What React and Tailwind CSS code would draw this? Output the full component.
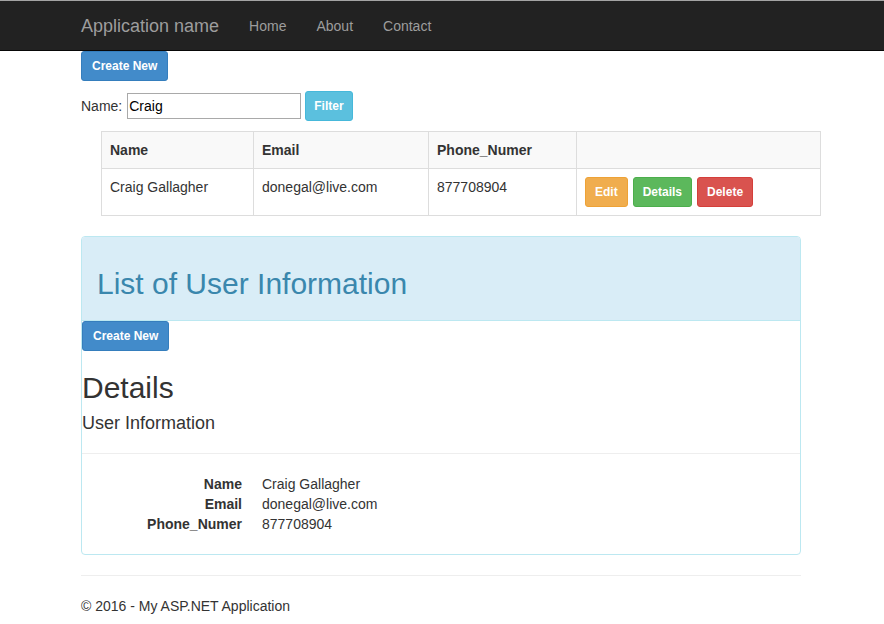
export default function App() {
  return (
    <div className="min-h-screen bg-white text-[14px] leading-[20px] text-[#333] font-['Liberation_Sans',Arial,sans-serif]">
      {/* navbar */}
      <nav className="h-[51px] bg-[#222] border-t border-t-[#a4a4a4] border-b border-b-[#080808]">
        <div className="w-[750px] mx-auto px-[15px] flex items-center h-full -translate-x-[1px]">
          <span className="text-[18px] text-[#9d9d9d] mr-[15px]">Application name</span>
          <span className="text-[#9d9d9d] px-[15px]">Home</span>
          <span className="text-[#9d9d9d] px-[15px]">About</span>
          <span className="text-[#9d9d9d] px-[15px]">Contact</span>
        </div>
      </nav>

      <div className="w-[750px] mx-auto px-[15px] -translate-x-[1px]">
        <Btn pad="px-[10px]" className="bg-[#428bca] border-[#357ebd]">Create New</Btn>

        <div className="flex items-center mt-[10px]">
          <span>Name:</span>
          <input
            defaultValue="Craig"
            className="ml-[5px] w-[174px] h-[26px] border border-[#a9a9a9] px-[1px] text-[14px] text-black outline-none"
          />
          <Btn pad="px-[8px]" className="ml-[4px] bg-[#5bc0de] border-[#46b8da]">Filter</Btn>
        </div>

        <table className="ml-[20px] mt-[10px] w-[720px] border-collapse border border-[#ddd]">
          <thead>
            <tr className="bg-[#f9f9f9]">
              <th className="w-[152px] border border-[#ddd] px-[8px] py-[8px] text-left font-bold">Name</th>
              <th className="w-[175px] border border-[#ddd] px-[8px] py-[8px] text-left font-bold">Email</th>
              <th className="w-[148px] border border-[#ddd] px-[8px] py-[8px] text-left font-bold">Phone_Numer</th>
              <th className="border border-[#ddd] px-[8px] py-[8px]"></th>
            </tr>
          </thead>
          <tbody>
            <tr>
              <td className="border border-[#ddd] px-[8px] py-[8px] align-top">Craig Gallagher</td>
              <td className="border border-[#ddd] px-[8px] py-[8px] align-top">donegal@live.com</td>
              <td className="border border-[#ddd] px-[8px] py-[8px] align-top">877708904</td>
              <td className="border border-[#ddd] px-[8px] py-[8px] align-top">
                <div className="flex gap-[5px]">
                  <Btn pad="px-[9px]" className="bg-[#f0ad4e] border-[#eea236]">Edit</Btn>
                  <Btn pad="px-[9px]" className="bg-[#5cb85c] border-[#4cae4c]">Details</Btn>
                  <Btn pad="px-[9px]" className="bg-[#d9534f] border-[#d43f3a]">Delete</Btn>
                </div>
              </td>
            </tr>
          </tbody>
        </table>

        {/* panel */}
        <div className="mt-[20px] border border-[#bce8f1] rounded-[4px]">
          <div className="bg-[#d9edf7] border-b border-[#bce8f1] rounded-t-[3px] px-[15px] pt-[30px] pb-[20px]">
            <h2 className="text-[30px] leading-[33px] text-[#3a87ad]">List of User Information</h2>
          </div>
          <Btn pad="px-[10px]" className="bg-[#428bca] border-[#357ebd]">Create New</Btn>
          <h2 className="mt-[20px] text-[30px] leading-[33px] text-[#333]">Details</h2>
          <h4 className="mt-[9px] text-[18px] leading-[20px]">User Information</h4>
          <hr className="mt-[20px] border-t border-[#eee]" />
          <dl className="mt-[20px] mb-[20px]">
            <Row label="Name" value="Craig Gallagher" />
            <Row label="Email" value="donegal@live.com" />
            <Row label="Phone_Numer" value="877708904" />
          </dl>
        </div>

        <hr className="mt-[20px] border-t border-[#eee]" />
        <footer className="mt-[20px]">© 2016 - My ASP.NET Application</footer>
      </div>
    </div>
  )
}

function Btn({ className, pad, children }) {
  return (
    <button className={"h-[30px] border rounded-[3px] text-[12px] font-bold text-white " + pad + " " + className}>
      {children}
    </button>
  )
}

function Row({ label, value }) {
  return (
    <div className="flex">
      <dt className="w-[160px] text-right font-bold">{label}</dt>
      <dd className="ml-[20px]">{value}</dd>
    </div>
  )
}
